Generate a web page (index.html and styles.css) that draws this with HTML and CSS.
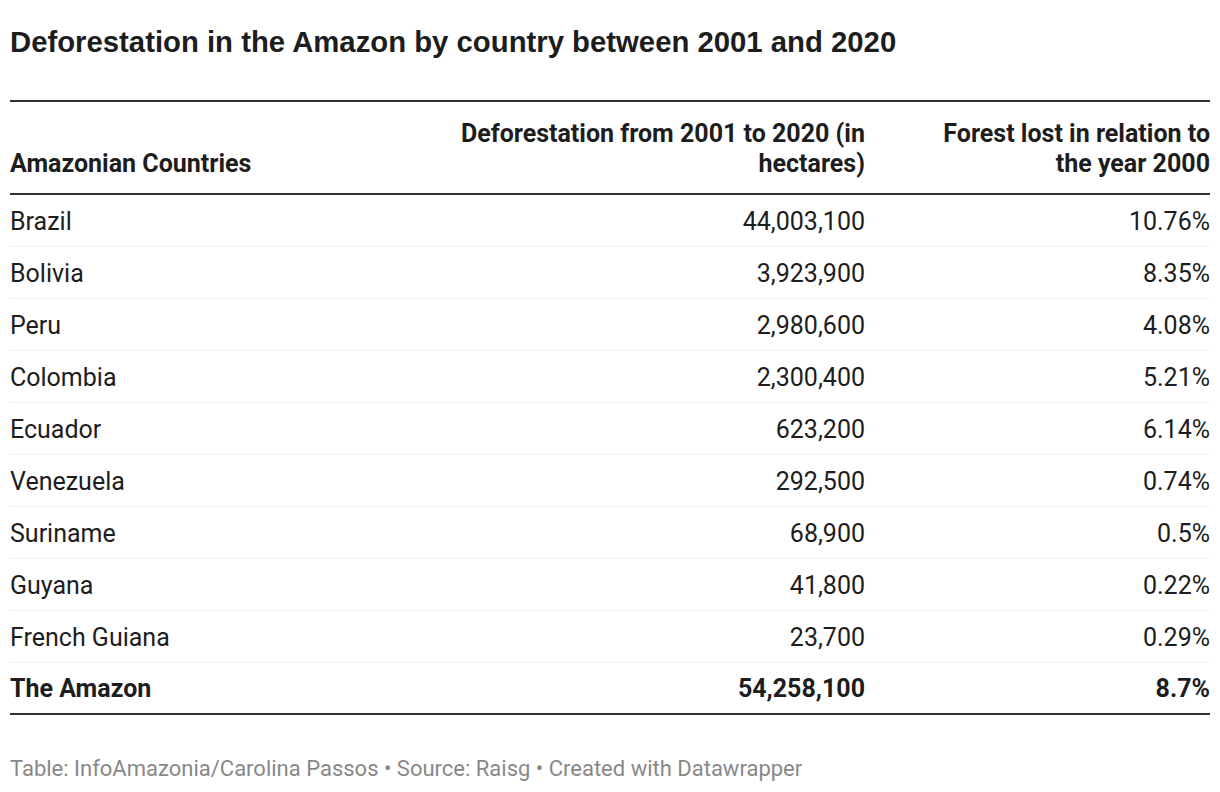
FILE: index.html
```html
<!DOCTYPE html>
<html lang="en">
<head>
<meta charset="utf-8">
<title>Deforestation in the Amazon</title>
<link rel="stylesheet" href="styles.css">
</head>
<body>
<div class="chart">
  <h1 class="title">Deforestation in the Amazon by country between 2001 and 2020</h1>
  <table class="data">
    <colgroup>
      <col class="c1">
      <col class="c2">
      <col class="c3">
    </colgroup>
    <thead>
      <tr>
        <th class="left">Amazonian Countries</th>
        <th class="num mid">Deforestation from 2001 to 2020 (in hectares)</th>
        <th class="num last">Forest lost in relation to the year 2000</th>
      </tr>
    </thead>
    <tbody>
      <tr><td class="left">Brazil</td><td class="num mid">44,003,100</td><td class="num last">10.76%</td></tr>
      <tr><td class="left">Bolivia</td><td class="num mid">3,923,900</td><td class="num last">8.35%</td></tr>
      <tr><td class="left">Peru</td><td class="num mid">2,980,600</td><td class="num last">4.08%</td></tr>
      <tr><td class="left">Colombia</td><td class="num mid">2,300,400</td><td class="num last">5.21%</td></tr>
      <tr><td class="left">Ecuador</td><td class="num mid">623,200</td><td class="num last">6.14%</td></tr>
      <tr><td class="left">Venezuela</td><td class="num mid">292,500</td><td class="num last">0.74%</td></tr>
      <tr><td class="left">Suriname</td><td class="num mid">68,900</td><td class="num last">0.5%</td></tr>
      <tr><td class="left">Guyana</td><td class="num mid">41,800</td><td class="num last">0.22%</td></tr>
      <tr><td class="left">French Guiana</td><td class="num mid">23,700</td><td class="num last">0.29%</td></tr>
      <tr class="total"><td class="left">The Amazon</td><td class="num mid">54,258,100</td><td class="num last">8.7%</td></tr>
    </tbody>
  </table>
  <p class="footer">Table: InfoAmazonia/Carolina Passos • Source: Raisg • Created with Datawrapper</p>
</div>
</body>
</html>
```

FILE: styles.css
```css
html, body {
  margin: 0;
  padding: 0;
  background: #ffffff;
}

.chart {
  padding: 0 10px;
  width: 1200px;
  font-family: Roboto, "Liberation Sans", sans-serif;
  color: #1d1d1d;
}

.title {
  margin: 0;
  padding-top: 24px;
  height: 100px;
  box-sizing: border-box;
  font-family: "Liberation Sans", Arial, sans-serif;
  font-weight: 700;
  font-size: 29.3px;
  line-height: 36px;
  color: #1d1d1d;
}

.data {
  width: 1200px;
  table-layout: fixed;
  border-collapse: collapse;
  border-top: 2px solid #333333;
  border-bottom: 2px solid #333333;
  font-size: 25px;
}

.c1 { width: 415px; }
.c2 { width: 450px; }
.c3 { width: 335px; }

.data th {
  font-weight: 700;
  line-height: 30px;
  vertical-align: bottom;
  padding-top: 17px;
  padding-bottom: 14px;
  border-bottom: 2px solid #333333;
}

.data td {
  height: 52px;
  box-sizing: border-box;
  padding-top: 3px;
  padding-bottom: 0;
  line-height: 30px;
  vertical-align: middle;
  border-bottom: 1px solid #eeeeee;
}

.data tr.total td {
  font-weight: 700;
  border-bottom: none;
}

.left {
  text-align: left;
  padding-left: 0;
  padding-right: 10px;
}

.num {
  text-align: right;
}

.mid {
  padding-left: 10px;
  padding-right: 10px;
}

.last {
  padding-left: 45px;
  padding-right: 0;
}

.footer {
  margin: 0;
  padding-top: 39px;
  font-size: 22px;
  line-height: 30px;
  color: #888888;
}
```
